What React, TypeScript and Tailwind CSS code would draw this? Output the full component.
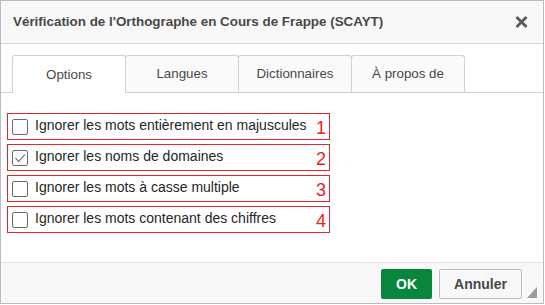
import { useState } from 'react';

const tabs = ['Options', 'Langues', 'Dictionnaires', 'À propos de'];

const options = [
    { label: 'Ignorer les mots entièrement en majuscules', checked: false },
    { label: 'Ignorer les noms de domaines', checked: true },
    { label: 'Ignorer les mots à casse multiple', checked: false },
    { label: 'Ignorer les mots contenant des chiffres', checked: false },
];

function Checkbox({ checked }: { checked: boolean }) {
    return (
        <span className="w-4 h-4 shrink-0 border-[1.5px] border-[#6b6b6b] rounded-[2px] bg-white flex items-center justify-center">
            {checked && (
                <svg width="12" height="12" viewBox="0 0 12 12">
                    <polyline points="1.5,6 4.5,9.5 11,2.5" fill="none" stroke="#555" strokeWidth="1.1" />
                </svg>
            )}
        </span>
    );
}

export default function App() {
    const [active, setActive] = useState(0);

    return (
        <div className="w-[545px] h-[305px] bg-white font-['Liberation_Sans',Arial,sans-serif]">
            <div className="relative w-[544px] h-[304px] border border-[#bcbcbc] flex flex-col">
                {/* Title bar */}
                <div className="h-[43px] shrink-0 border-b border-[#d6d6d6] bg-[#f8f8f8] flex items-center justify-between pl-3 pr-[15px]">
                    <span className="text-[13.4px] font-bold text-[#484848]">
                        Vérification de l'Orthographe en Cours de Frappe (SCAYT)
                    </span>
                    <svg width="13" height="12" viewBox="0 0 13 12">
                        <path d="M1.5 1 L11.5 11 M11.5 1 L1.5 11" stroke="#5a5a5a" strokeWidth="2.8" />
                    </svg>
                </div>

                {/* Tabs */}
                <div className="h-[49px] shrink-0 pt-[11px] pl-[11px] border-b border-[#d1d1d1] flex">
                    {tabs.map((t, i) => (
                        <button
                            key={t}
                            onClick={() => setActive(i)}
                            className={`w-[114px] flex items-center justify-center border-t border-l border-r border-[#d1d1d1] rounded-t-[3px] text-[13.33px] text-[#484848] ${
                                i > 0 ? '-ml-px' : ''
                            } ${active === i ? 'h-[38px] bg-white relative z-10' : 'h-[37px] bg-[#fafafa]'}`}
                        >
                            {t}
                        </button>
                    ))}
                </div>

                {/* Options */}
                <div className="flex-1 pt-5 pl-[6px] flex flex-col gap-1">
                    {options.map((o, i) => (
                        <div
                            key={o.label}
                            className="w-[323px] h-[27px] border border-[#e3262b] flex items-center pl-1 pr-[3px]"
                        >
                            <Checkbox checked={o.checked} />
                            <span className="ml-[7px] mb-[3px] text-[14px] text-[#262626] leading-5">{o.label}</span>
                            <span className="ml-auto mt-[3px] text-[18px] leading-5 text-[#f01c1c]">{i + 1}</span>
                        </div>
                    ))}
                </div>

                {/* Footer */}
                <div className="h-[41px] shrink-0 border-t border-[#e3e3e3] bg-[#f8f8f8] flex justify-end items-start pt-[6px] pr-[21px] gap-[7px]">
                    <button className="w-[51px] h-[30px] rounded-[2px] bg-[#09863e] text-white text-[14px] font-bold">
                        OK
                    </button>
                    <button className="w-[83px] h-[30px] rounded-[2px] border border-[#bcbcbc] bg-[#f8f8f8] text-[#484848] text-[14px] font-bold">
                        Annuler
                    </button>
                </div>

                {/* Resize grip */}
                <svg className="absolute right-[6px] bottom-[5px]" width="10" height="11" viewBox="0 0 10 11">
                    <polygon points="10,0 10,11 0,11" fill="#9c9c9c" />
                </svg>
            </div>
        </div>
    );
}
